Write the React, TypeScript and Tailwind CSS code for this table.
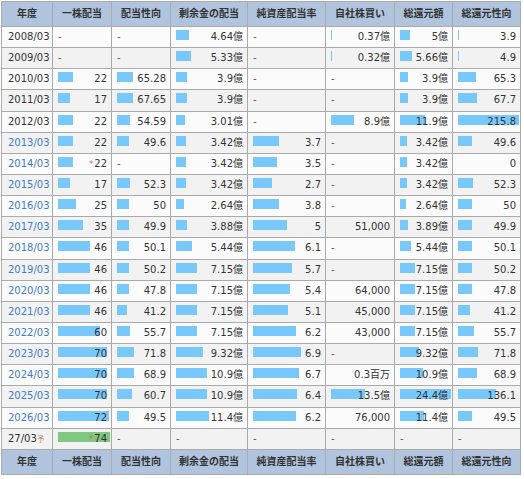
import React from 'react';

type Col = { label: string; w: number; max?: number };

// 列幅とバーの基準値（最大値）
const cols: Col[] = [
  { label: '年度', w: 51 },
  { label: '一株配当', w: 59, max: 74 },
  { label: '配当性向', w: 59, max: 215.8 },
  { label: '剰余金の配当', w: 77, max: 24.4 },
  { label: '純資産配当率', w: 78, max: 10.3 },
  { label: '自社株買い', w: 69, max: 24.4 },
  { label: '総還元額', w: 58, max: 24.4 },
  { label: '総還元性向', w: 68, max: 215.8 },
];

const rows: string[][] = [
  ['2008/03', '-', '-', '4.64億', '-', '0.37億', '5億', '3.9'],
  ['2009/03', '-', '-', '5.33億', '-', '0.32億', '5.66億', '4.9'],
  ['2010/03', '22', '65.28', '3.9億', '-', '-', '3.9億', '65.3'],
  ['2011/03', '17', '67.65', '3.9億', '-', '-', '3.9億', '67.7'],
  ['2012/03', '22', '54.59', '3.01億', '-', '8.9億', '11.9億', '215.8'],
  ['2013/03', '22', '49.6', '3.42億', '3.7', '-', '3.42億', '49.6'],
  ['2014/03', '*22', '-', '3.42億', '3.5', '-', '3.42億', '0'],
  ['2015/03', '17', '52.3', '3.42億', '2.7', '-', '3.42億', '52.3'],
  ['2016/03', '25', '50', '2.64億', '3.8', '-', '2.64億', '50'],
  ['2017/03', '35', '49.9', '3.88億', '5', '51,000', '3.89億', '49.9'],
  ['2018/03', '46', '50.1', '5.44億', '6.1', '-', '5.44億', '50.1'],
  ['2019/03', '46', '50.2', '7.15億', '5.7', '-', '7.15億', '50.2'],
  ['2020/03', '46', '47.8', '7.15億', '5.4', '64,000', '7.15億', '47.8'],
  ['2021/03', '46', '41.2', '7.15億', '5.1', '45,000', '7.15億', '41.2'],
  ['2022/03', '60', '55.7', '7.15億', '6.2', '43,000', '7.15億', '55.7'],
  ['2023/03', '70', '71.8', '9.32億', '6.9', '-', '9.32億', '71.8'],
  ['2024/03', '70', '68.9', '10.9億', '6.7', '0.3百万', '10.9億', '68.9'],
  ['2025/03', '70', '60.7', '10.9億', '6.4', '13.5億', '24.4億', '136.1'],
  ['2026/03', '72', '49.5', '11.4億', '6.2', '76,000', '11.4億', '49.5'],
  ['27/03', '*74', '-', '-', '-', '-', '-', '-'],
];

const num = (s: string): number | null => {
  const m = s.match(/^\*?([\d.]+)(億)?$/);
  return m ? parseFloat(m[1]) : null;
};

const HeaderRow: React.FC = () => (
  <tr className="h-[25px]">
    {cols.map((c) => (
      <th
        key={c.label}
        className="border border-[#aaaaaa] bg-[#b0c4de] p-0 text-center font-bold text-[#333]"
      >
        {c.label}
      </th>
    ))}
  </tr>
);

const App: React.FC = () => {
  return (
    <div className="min-h-screen bg-white pl-[1px] pt-[1px] font-['DejaVu_Sans','Noto_Sans_CJK_JP',sans-serif] text-[10px] leading-none text-[#333]">
      <table className="w-[520px] table-fixed border-collapse">
        <colgroup>
          {cols.map((c) => (
            <col key={c.label} style={{ width: c.w }} />
          ))}
        </colgroup>
        <thead>
          <HeaderRow />
        </thead>
        <tbody>
          {rows.map((r, i) => {
            const forecast = i === rows.length - 1;
            return (
              <tr key={r[0]} className={`h-[21.15px] ${i % 2 ? 'bg-[#f2f2f2]' : 'bg-[#fbfbfb]'}`}>
                <td
                  className={`border border-[#aaaaaa] pl-[6px] ${
                    i >= 5 && !forecast ? 'text-[#3d7cc9]' : 'text-[#333]'
                  }`}
                >
                  {r[0]}
                  {forecast && <span className="text-[8px] text-[#c8844c]">予</span>}
                </td>
                {r.slice(1).map((v, j) => {
                  const col = cols[j + 1];
                  if (v === '-') {
                    return (
                      <td key={j} className="border border-[#aaaaaa] pl-[5px] text-left text-[#555]">
                        -
                      </td>
                    );
                  }
                  const n = num(v);
                  const bw = n && col.max ? Math.max(1, Math.round((n / col.max) * (col.w - 7))) : 0;
                  const star = v.startsWith('*');
                  return (
                    <td key={j} className="relative border border-[#aaaaaa] pr-[4px] text-right">
                      {bw > 0 && (
                        <span
                          className={`absolute left-[5px] top-[3px] h-[10px] ${
                            forecast ? 'bg-[#80c77f]' : 'bg-[#78c8fc]'
                          }`}
                          style={{ width: bw }}
                        />
                      )}
                      <span className="relative">
                        {star && <span className="mr-[1px] text-[8px] text-[#e06060]">*</span>}
                        {star ? v.slice(1) : v}
                      </span>
                    </td>
                  );
                })}
              </tr>
            );
          })}
        </tbody>
        <tfoot>
          <HeaderRow />
        </tfoot>
      </table>
    </div>
  );
};

export default App;
